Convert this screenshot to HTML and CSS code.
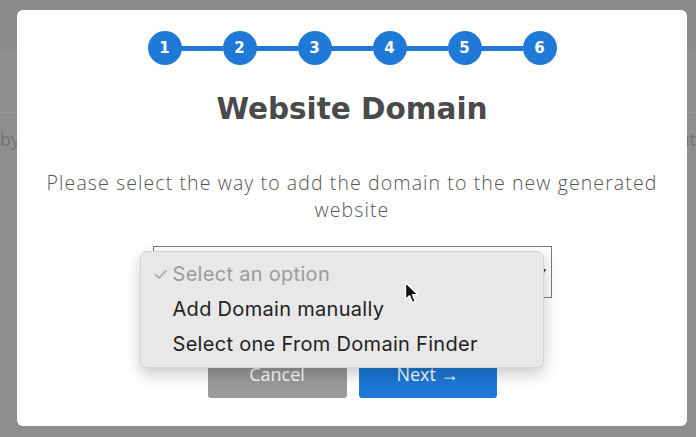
FILE: index.html
```html
<!DOCTYPE html>
<html lang="en">
<head>
    <meta charset="UTF-8">
    <meta name="viewport" content="width=device-width, initial-scale=1.0">
    <title>Website Domain</title>
    <link rel="stylesheet" href="styles.css">
</head>
<body>
    <div class="page">
        <div class="page-top"></div>
        <div class="page-row"></div>
        <div class="page-text"><span>by</span><span>ut</span></div>
    </div>

    <div class="modal">
        <div class="steps">
            <div class="step">1</div>
            <div class="step-line"></div>
            <div class="step">2</div>
            <div class="step-line"></div>
            <div class="step">3</div>
            <div class="step-line"></div>
            <div class="step">4</div>
            <div class="step-line"></div>
            <div class="step">5</div>
            <div class="step-line"></div>
            <div class="step">6</div>
        </div>

        <h2 class="title">Website Domain</h2>
        <p class="lead">Please select the way to add the domain to the new generated website</p>

        <div class="select">
            <span class="select-arrow"></span>
            <div class="menu">
                <div class="menu-item placeholder"><span class="check">✓</span>Select an option</div>
                <div class="menu-item">Add Domain manually</div>
                <div class="menu-item">Select one From Domain Finder</div>
            </div>
            <svg class="cursor" width="16" height="24" viewBox="0 0 16 24">
                <path d="M1.5 1.5 L1.5 18.5 L5.5 14.8 L8.4 21.6 L11.3 20.4 L8.5 13.8 L13.8 13.6 Z" fill="#111" stroke="#fff" stroke-width="1.4" stroke-linejoin="round"/>
            </svg>
        </div>

        <div class="actions">
            <button class="btn btn-cancel">Cancel</button>
            <button class="btn btn-next">Next →</button>
        </div>
    </div>
</body>
</html>
```

FILE: styles.css
```css
body { margin: 0; background: #8f8f8f; font-family: "Open Sans", Arial, sans-serif; overflow: hidden; }
.page { height: 437px; }
.page-top { height: 50px; background: #8b8b8b; }
.page-row { height: 62px; border-bottom: 1px solid #9a9a9a; }
.page-text { display: flex; justify-content: space-between; margin-top: 14px; font-size: 18px; color: #727272; }

.modal { position: absolute; left: 17px; top: 10px; width: 670px; height: 416px; background: #fff; border-radius: 6px; display: flex; flex-direction: column; align-items: center; }

.steps { display: flex; align-items: center; margin-top: 21px; }
.step { width: 34px; height: 34px; border-radius: 50%; background: #1f79d7; color: #fff; font-family: "DejaVu Sans", sans-serif; font-weight: bold; font-size: 15px; display: flex; align-items: center; justify-content: center; }
.step-line { width: 42px; height: 5px; background: #1f79d7; margin: 0 -0.5px; }

.title { margin: 26px 0 0; font-family: "DejaVu Sans", sans-serif; font-weight: bold; font-size: 29.5px; line-height: 36px; color: #4a4a4a; }
.lead { margin: 42px 0 0; width: 640px; text-align: center; font-family: "Open Sans", sans-serif; font-weight: 300; font-size: 19.5px; line-height: 27px; letter-spacing: 1.1px; color: #555; }

.select { position: relative; width: 399px; height: 52px; margin-top: 23px; border: 1px solid #7a7a7a; box-sizing: border-box; background: #fff; }
.select-arrow { position: absolute; right: 5px; top: 22px; border-left: 2px solid transparent; border-right: 2px solid transparent; border-top: 4px solid #333; }
.menu { position: absolute; left: -14px; top: 4px; width: 404px; height: 117px; box-sizing: border-box; padding-top: 5px; background: #e8e8e8; border: 1px solid #d4d4d4; border-radius: 7px; box-shadow: 0 6px 16px rgba(0,0,0,0.22); font-family: Inter, "Liberation Sans", sans-serif; font-size: 20px; letter-spacing: 0.3px; color: #222; z-index: 2; }
.menu-item { height: 35px; line-height: 35px; padding-left: 32px; position: relative; }
.placeholder { color: #9b9b9b; }
.check { position: absolute; left: 12px; font-size: 18px; color: #a5a5a5; }
.cursor { position: absolute; left: 250px; top: 34px; z-index: 3; }

.actions { display: flex; gap: 12px; margin-top: 56px; }
.btn { width: 139px; height: 44px; padding: 0 0 5px; border: none; border-radius: 3px; color: #fff; font-family: "Open Sans", sans-serif; font-size: 18px; }
.btn-cancel { background: #9a9a9a; }
.btn-next { background: #1d78d6; width: 138px; }
```
